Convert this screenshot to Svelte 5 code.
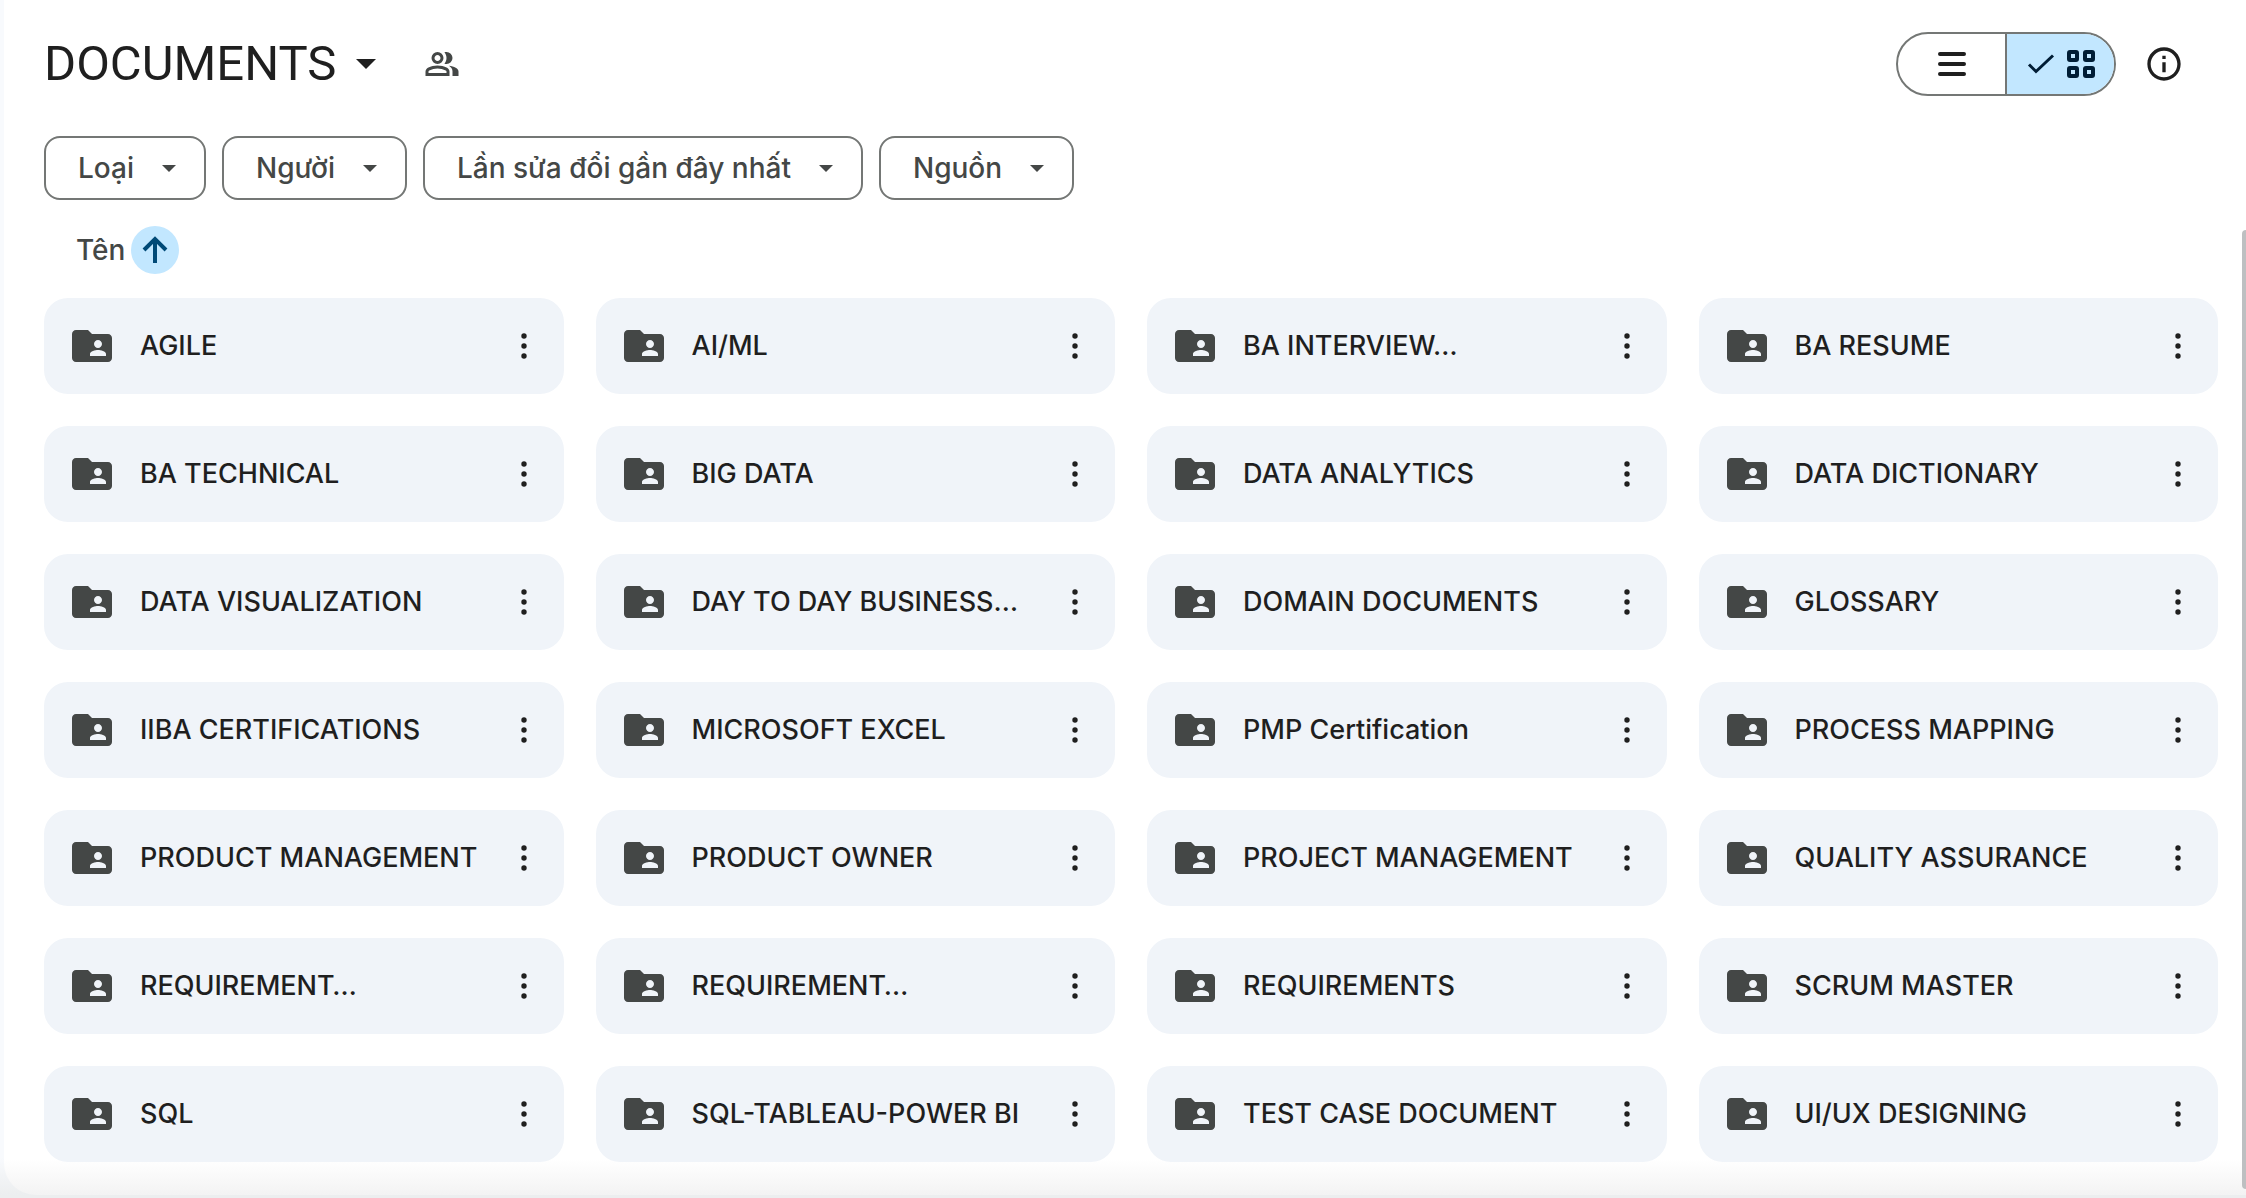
<script lang="ts">
  const filters = ['Loại', 'Người', 'Lần sửa đổi gần đây nhất', 'Nguồn']

  const folders = [
    'AGILE', 'AI/ML', 'BA INTERVIEW…', 'BA RESUME',
    'BA TECHNICAL', 'BIG DATA', 'DATA ANALYTICS', 'DATA DICTIONARY',
    'DATA VISUALIZATION', 'DAY TO DAY BUSINESS…', 'DOMAIN DOCUMENTS', 'GLOSSARY',
    'IIBA CERTIFICATIONS', 'MICROSOFT EXCEL', 'PMP Certification', 'PROCESS MAPPING',
    'PRODUCT MANAGEMENT', 'PRODUCT OWNER', 'PROJECT MANAGEMENT', 'QUALITY ASSURANCE',
    'REQUIREMENT…', 'REQUIREMENT…', 'REQUIREMENTS', 'SCRUM MASTER',
    'SQL', 'SQL-TABLEAU-POWER BI', 'TEST CASE DOCUMENT', 'UI/UX DESIGNING',
  ]

  let view = $state<'list' | 'grid'>('grid')
  let ascending = $state(true)

  const shown = $derived(ascending ? folders : [...folders].reverse())
</script>

<div class="page">
  <main class="panel">
    <header class="top">
      <h1><button class="title">DOCUMENTS
        <svg class="caret" viewBox="0 0 20 10" aria-hidden="true"><path d="M0 0h20L10 10z" /></svg>
      </button></h1>
      <button class="icon-btn people" aria-label="Quản lý quyền truy cập">
        <svg viewBox="0 -960 960 960" aria-hidden="true"><path d="M40-160v-112q0-34 17.5-62.5T104-378q62-31 126-46.5T360-440q66 0 130 15.5T616-378q29 15 46.5 43.5T680-272v112H40Zm720 0v-120q0-44-24.5-84.5T666-434q51 6 96 20.5t84 35.5q36 20 55 44.5t19 53.5v120H760ZM360-480q-66 0-113-47t-47-113q0-66 47-113t113-47q66 0 113 47t47 113q0 66-47 113t-113 47Zm400-160q0 66-47 113t-113 47q-11 0-28-2.5t-28-5.5q27-32 41.5-71t14.5-81q0-42-14.5-81T544-792q14-5 28-6.5t28-1.5q66 0 113 47t47 113ZM120-240h480v-32q0-11-5.5-20T580-306q-54-27-109-40.5T360-360q-56 0-111 13.5T140-306q-9 5-14.5 14t-5.5 20v32Zm240-320q33 0 56.5-23.5T440-640q0-33-23.5-56.5T360-720q-33 0-56.5 23.5T280-640q0 33 23.5 56.5T360-560Z" /></svg>
      </button>
      <div class="views" role="group" aria-label="Bố cục">
        <button class:on={view === 'list'} aria-pressed={view === 'list'} aria-label="Danh sách" onclick={() => (view = 'list')}>
          <svg class="glyph" viewBox="0 0 28 28" aria-hidden="true"><path d="M2 4h24M2 14h24M2 24h24" fill="none" stroke="currentColor" stroke-width="4" stroke-linecap="round" /></svg>
        </button>
        <button class:on={view === 'grid'} aria-pressed={view === 'grid'} aria-label="Lưới" onclick={() => (view = 'grid')}>
          <svg class="glyph" viewBox="0 0 28 28" aria-hidden="true"><path d="M2 14.500l7 7L26 5.500" fill="none" stroke="currentColor" stroke-width="3" /></svg>
          <svg class="glyph" viewBox="0 0 28 28" aria-hidden="true">
            <g fill="none" stroke="currentColor" stroke-width="4">
              <rect x="2" y="2" width="8" height="8" rx="1" />
              <rect x="18" y="2" width="8" height="8" rx="1" />
              <rect x="2" y="18" width="8" height="8" rx="1" />
              <rect x="18" y="18" width="8" height="8" rx="1" />
            </g>
          </svg>
        </button>
      </div>
      <button class="icon-btn info" aria-label="Xem chi tiết">
        <svg viewBox="0 0 24 24" aria-hidden="true"><path d="M11 7h2v2h-2zm0 4h2v6h-2zm1-9C6.480 2 2 6.480 2 12s4.480 10 10 10 10-4.480 10-10S17.520 2 12 2zm0 18c-4.410 0-8-3.590-8-8s3.590-8 8-8 8 3.590 8 8-3.590 8-8 8z" /></svg>
      </button>
    </header>

    <div class="filters">
      {#each filters as label}
        <button class="chip">{label}
          <svg viewBox="0 0 14 7" aria-hidden="true"><path d="M0 0h14L7 7z" /></svg>
        </button>
      {/each}
    </div>

    <div class="sort">
      <span id="sort-label">Tên</span>
      <button class="dir" class:desc={!ascending} aria-labelledby="sort-label" onclick={() => (ascending = !ascending)}>
        <svg viewBox="0 0 28 28" aria-hidden="true"><path d="M14 27V3M3 14L14 3l11 11" fill="none" stroke="currentColor" stroke-width="4" /></svg>
      </button>
    </div>

    <ul class="grid" class:list={view === 'list'}>
      {#each shown as name}
        <li class="card">
          <svg class="folder" viewBox="0 0 24 24" aria-hidden="true"><path d="M20 6h-8l-2-2H4c-1.100 0-2 .9-2 2v12c0 1.100.9 2 2 2h16c1.100 0 2-.9 2-2V8c0-1.100-.9-2-2-2zm-5 3c1.100 0 2 .9 2 2s-.9 2-2 2-2-.9-2-2 .9-2 2-2zm4 8h-8v-1c0-1.330 2.670-2 4-2s4 .67 4 2v1z" /></svg>
          <span class="name">{name}</span>
          <button class="more" aria-label="Thao tác khác">
            <svg viewBox="0 0 6 26" aria-hidden="true">
              <circle cx="3" cy="3" r="2.700" /><circle cx="3" cy="13" r="2.700" /><circle cx="3" cy="23" r="2.700" />
            </svg>
          </button>
        </li>
      {/each}
    </ul>
  </main>
  <div class="scrollbar"></div>
</div>

<style>
  :global(body) {
    margin: 0;
    background: #f8fafd;
  }
  .page {
    position: relative;
    min-height: 100vh;
    box-sizing: border-box;
    padding: 0 0 3px 4px;
    background: linear-gradient(to top, #eceeef 3px, #f8fafd 40px);
    font-family: Inter, Roboto, sans-serif;
    font-size: 28px;
    line-height: 36px;
    color: #1f1f1f;
    display: flex;
  }
  .panel {
    flex: 1;
    min-width: 0;
    padding: 32px 28px 32px 40px;
    border-radius: 0 0 0 32px;
    background: linear-gradient(to top, #f3f3f3, #fff 36px);
  }
  svg {
    display: block;
    flex: none;
    fill: currentColor;
  }
  button {
    font: inherit;
    color: inherit;
    background: none;
    border: none;
    padding: 0;
    cursor: pointer;
    display: flex;
    align-items: center;
    justify-content: center;
  }

  .top {
    display: flex;
    align-items: center;
    height: 64px;
  }
  h1 {
    margin: 0;
    font-family: Roboto, sans-serif;
    font-size: 49px;
    line-height: 64px;
    font-weight: 400;
  }
  .title { gap: 20px; }
  .caret {
    width: 20px;
    height: 10px;
  }
  .icon-btn {
    width: 64px;
    height: 64px;
    border-radius: 50%;
  }
  .people {
    margin-left: 34px;
    color: #444746;
  }
  .people svg {
    width: 36px;
    height: 36px;
  }
  .info svg {
    width: 40px;
    height: 40px;
  }
  .info {
    margin: 0 22px 0 16px;
  }
  .views {
    display: flex;
    margin-left: auto;
    width: 220px;
    height: 64px;
    box-sizing: border-box;
    border: 2px solid #747775;
    border-radius: 32px;
    overflow: hidden;
  }
  .views button {
    flex: 1;
    gap: 12px;
  }
  .views button + button { border-left: 2px solid #747775; }
  .views .on {
    background: #c2e7ff;
    color: #001d35;
  }
  .glyph {
    width: 28px;
    height: 28px;
  }

  .filters {
    display: flex;
    gap: 16px;
    margin-top: 40px;
  }
  .chip {
    height: 64px;
    padding: 0 28px 0 32px;
    gap: 28px;
    border: 2px solid #747775;
    border-radius: 16px;
    color: #444746;
    font-weight: 500;
    white-space: nowrap;
  }
  .chip svg {
    width: 14px;
    height: 7px;
  }

  .sort {
    display: flex;
    align-items: center;
    gap: 6px;
    margin-top: 26px;
    padding-left: 32px;
    color: #444746;
    font-weight: 500;
  }
  .dir {
    width: 48px;
    height: 48px;
    border-radius: 50%;
    background: #c2e7ff;
    color: #004a77;
  }
  .dir svg {
    width: 28px;
    height: 28px;
  }
  .desc svg { transform: rotate(180deg); }

  .grid {
    list-style: none;
    margin: 24px 0 0;
    padding: 0;
    display: grid;
    grid-template-columns: repeat(4, minmax(0, 1fr));
    gap: 32px;
  }
  .list { grid-template-columns: minmax(0, 1fr); }
  .card {
    display: flex;
    align-items: center;
    height: 96px;
    padding: 0 16px 0 24px;
    box-sizing: border-box;
    border-radius: 24px;
    background: #f0f4f9;
  }
  .folder {
    width: 48px;
    height: 48px;
    color: #444746;
  }
  .name {
    flex: 1;
    min-width: 0;
    margin-left: 24px;
    font-size: 27px;
    font-weight: 500;
    white-space: nowrap;
    overflow: hidden;
    text-overflow: ellipsis;
  }
  .more {
    width: 48px;
    height: 48px;
  }
  .more svg {
    width: 6px;
    height: 26px;
  }

  /* Thumb of the list's scrollbar, over the right edge of the panel */
  .scrollbar {
    position: absolute;
    top: 230px;
    right: 0;
    bottom: 9px;
    width: 4px;
    border-radius: 4px 0 0 4px;
    background: #bdbfc1;
  }
</style>
